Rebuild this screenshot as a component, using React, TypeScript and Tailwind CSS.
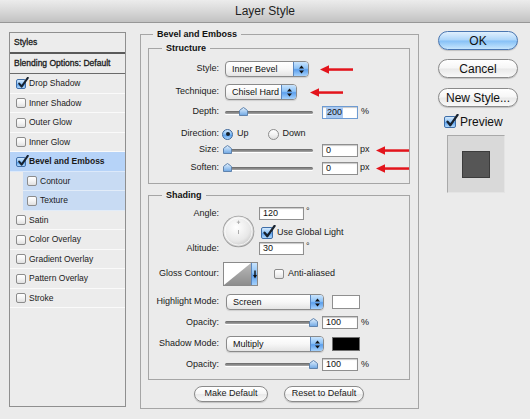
import React from "react";

function CheckBox({ checked = false, big = false }: { checked?: boolean; big?: boolean }) {
  return (
    <span
      className={`relative inline-block shrink-0 rounded-[2px] border ${big ? "h-[12px] w-[12px]" : "h-[10px] w-[10px]"} ${
        checked
          ? "border-[#3f6ea8] bg-[linear-gradient(180deg,#d3e9fd_0%,#94c6f7_45%,#5fa3ee_55%,#afd8fd_100%)]"
          : "border-[#8c8c8c] bg-[linear-gradient(180deg,#ffffff_0%,#f4f4f4_50%,#e0e0e0_100%)]"
      }`}
    >
      {checked && (
        <svg
          className="absolute left-[0px] top-[-3px]"
          width={big ? 14 : 12}
          height={big ? 14 : 12}
          viewBox="0 0 12 12"
        >
          <path
            d="M2.2 6.6 L4.6 9.6 L10.8 0.8"
            fill="none"
            stroke="#17222f"
            strokeWidth="2"
            strokeLinecap="round"
            strokeLinejoin="round"
          />
        </svg>
      )}
    </span>
  );
}

function Radio({ checked = false }: { checked?: boolean }) {
  return (
    <span
      className={`flex h-[11px] w-[11px] shrink-0 items-center justify-center rounded-full border ${
        checked
          ? "border-[#3c679c] bg-[linear-gradient(180deg,#cfe6fd_0%,#8cc2f6_45%,#5aa0ec_55%,#aad5fd_100%)]"
          : "border-[#8c8c8c] bg-[linear-gradient(180deg,#ffffff_0%,#f2f2f2_50%,#dedede_100%)]"
      }`}
    >
      {checked && <span className="h-[4px] w-[4px] rounded-full bg-[#15202c]" />}
    </span>
  );
}

function Steps() {
  return (
    <svg width="5" height="9" viewBox="0 0 5 9">
      <polygon points="0,3.5 2.5,0.5 5,3.5" fill="#111" />
      <polygon points="0,5.5 5,5.5 2.5,8.5" fill="#111" />
    </svg>
  );
}

function Dropdown({ label, w, stepW }: { label: string; w: string; stepW: string }) {
  return (
    <div
      className={`flex h-[16px] shrink-0 overflow-hidden rounded-[4px] border border-[#8a8a8a] bg-[linear-gradient(180deg,#ffffff_0%,#f7f7f7_50%,#e4e4e4_100%)] shadow-[0_1px_1px_rgba(0,0,0,0.12)] ${w}`}
    >
      <span className="flex-1 pl-[6px] leading-[14px] text-[#111]">{label}</span>
      <span
        className={`flex items-center justify-center border-l border-[#5a87c0] bg-[linear-gradient(180deg,#c9e4fd_0%,#8ec3f7_45%,#5c9fec_55%,#a5d1fb_100%)] ${stepW}`}
      >
        <Steps />
      </span>
    </div>
  );
}

function Thumb() {
  return (
    <svg width="9" height="9" viewBox="0 0 9 9">
      <defs>
        <linearGradient id="thg" x1="0" y1="0" x2="0" y2="1">
          <stop offset="0" stopColor="#e3f0fc" />
          <stop offset="0.5" stopColor="#a9cdf2" />
          <stop offset="1" stopColor="#6ea6e2" />
        </linearGradient>
      </defs>
      <path
        d="M0.5 4 Q0.5 3.3 1.2 2.8 L4.5 0.5 L7.8 2.8 Q8.5 3.3 8.5 4 V8.5 H0.5 Z"
        fill="url(#thg)"
        stroke="#5f83ad"
        strokeWidth="1"
      />
    </svg>
  );
}

function Slider({ w, pos }: { w: string; pos: number }) {
  return (
    <div className={`relative flex h-[10px] shrink-0 items-center ${w}`}>
      <div className="h-[3px] w-full rounded-full bg-[linear-gradient(180deg,#666666,#a8a8a8)] shadow-[0_1px_0_#ffffff]" />
      <span className="absolute top-[0px] flex" style={{ left: pos }}>
        <Thumb />
      </span>
    </div>
  );
}

function NumInput({ value, w, selected = false }: { value: string; w: string; selected?: boolean }) {
  return (
    <div
      className={`flex h-[13px] shrink-0 items-center border bg-white pl-[3px] leading-[11px] text-[#111] shadow-[inset_0_1px_1px_rgba(0,0,0,0.22)] ${w} ${
        selected ? "border-[#6e9bd2]" : "border-[#8f8f8f]"
      }`}
    >
      {selected ? <span className="bg-[#a9c9f1] px-[1px]">{value}</span> : value}
    </div>
  );
}

function RedArrow() {
  return (
    <svg width="33" height="9" viewBox="0 0 33 9" className="shrink-0">
      <polygon points="0,4.5 9,0.3 9,8.7" fill="#e3141c" />
      <rect x="8" y="3.3" width="25" height="2.5" fill="#e3141c" />
    </svg>
  );
}

function Label({ children }: { children: React.ReactNode }) {
  return <span className="w-[70px] shrink-0 text-right text-[#1a1a1a]">{children}</span>;
}

function Pill({
  children,
  primary = false,
  cls,
}: {
  children: React.ReactNode;
  primary?: boolean;
  cls: string;
}) {
  return (
    <div
      className={`flex items-center justify-center rounded-full border shadow-[0_1px_1px_rgba(0,0,0,0.18)] ${cls} ${
        primary
          ? "border-[#4a77b2] bg-[linear-gradient(180deg,#e0f0fe_0%,#acd5fa_48%,#85c0f6_52%,#c7e6fd_100%)]"
          : "border-[#8a8a8a] bg-[linear-gradient(180deg,#ffffff_0%,#f6f6f6_48%,#e9e9e9_52%,#f9f9f9_100%)]"
      }`}
    >
      {children}
    </div>
  );
}

type Row = { label: string; h: string; checked?: boolean; kind?: "sel" | "sub" };

const rows: Row[] = [
  { label: "Drop Shadow", h: "h-[20px]", checked: true },
  { label: "Inner Shadow", h: "h-[19px]" },
  { label: "Outer Glow", h: "h-[20px]" },
  { label: "Inner Glow", h: "h-[19px]" },
  { label: "Bevel and Emboss", h: "h-[20px]", checked: true, kind: "sel" },
  { label: "Contour", h: "h-[19px]", kind: "sub" },
  { label: "Texture", h: "h-[20px]", kind: "sub" },
  { label: "Satin", h: "h-[19px]" },
  { label: "Color Overlay", h: "h-[20px]" },
  { label: "Gradient Overlay", h: "h-[19px]" },
  { label: "Pattern Overlay", h: "h-[20px]" },
  { label: "Stroke", h: "h-[19px]" },
];

function StyleRow({ r }: { r: Row }) {
  if (r.kind === "sub") {
    return (
      <div className={`flex ${r.h}`}>
        <div className="ml-[13px] flex flex-1 items-center gap-[2px] border-b border-[#e2ecf8] bg-[#c8dbf3] pl-[4px]">
          <CheckBox checked={r.checked} />
          <span className="pl-[1px]">{r.label}</span>
        </div>
      </div>
    );
  }
  return (
    <div
      className={`flex items-center gap-[2px] border-b pl-[6px] ${r.h} ${
        r.kind === "sel" ? "border-[#dce9fa] bg-[#b6d3f8] font-bold" : "border-[#fafafa]"
      }`}
    >
      <CheckBox checked={r.checked} />
      <span className="pl-[1px]">{r.label}</span>
    </div>
  );
}

export default function App() {
  return (
    <div className="flex h-[419px] w-[530px] flex-col overflow-hidden bg-[#ebebeb] font-['Liberation_Sans',Arial,sans-serif] text-[9px] text-[#1a1a1a]">
      {/* title bar */}
      <div className="flex h-[23px] shrink-0 items-center justify-center border-b border-[#979797] bg-[linear-gradient(180deg,#ececec_0%,#d8d8d8_50%,#c2c2c2_100%)] text-[12px] text-[#1e1e1e]">
        Layer Style
      </div>

      <div className="flex flex-1 items-start">
        {/* left styles list */}
        <div className="ml-[9px] mt-[9px] flex h-[375px] w-[117px] shrink-0 flex-col border border-[#8f8f8f] bg-[#ececec] text-[8.5px]">
          <div className="flex h-[21px] items-center border-b-2 border-[#5a5a5a] pl-[4px] [-webkit-text-stroke:0.3px_#1a1a1a]">
            Styles
          </div>
          <div className="flex h-[20px] items-center border-b border-[#6a6a6a] pl-[4px] [-webkit-text-stroke:0.3px_#1a1a1a]">
            Blending Options: Default
          </div>
          {rows.map((r) => (
            <StyleRow key={r.label} r={r} />
          ))}
        </div>

        {/* main group */}
        <fieldset className="ml-[14px] mt-[5px] w-[278px] shrink-0 border border-[#a5a5a5] pl-[7px] pr-[8px] pb-[6px]">
          <legend className="ml-[5px] px-[4px] font-bold leading-[13px] text-[#111]">Bevel and Emboss</legend>

          {/* Structure */}
          <fieldset className="mt-[1px] border border-[#a5a5a5] pb-[7px]">
            <legend className="ml-[13px] px-[4px] font-bold leading-[13px] text-[#111]">Structure</legend>
            <div className="flex flex-col">
              <div className="mt-[4px] flex h-[20px] items-center">
                <Label>Style:</Label>
                <div className="ml-[6px] flex items-center">
                  <Dropdown label="Inner Bevel" w="w-[84px]" stepW="w-[15px]" />
                  <span className="ml-[11px] flex">
                    <RedArrow />
                  </span>
                </div>
              </div>
              <div className="mt-[3px] flex h-[20px] items-center">
                <Label>Technique:</Label>
                <div className="ml-[6px] flex items-center">
                  <Dropdown label="Chisel Hard" w="w-[72px]" stepW="w-[15px]" />
                  <span className="ml-[13px] flex">
                    <RedArrow />
                  </span>
                </div>
              </div>
              <div className="mt-[2px] flex h-[16px] items-center">
                <Label>Depth:</Label>
                <div className="ml-[6px] flex items-center">
                  <Slider w="w-[88px]" pos={14} />
                  <span className="ml-[9px] flex">
                    <NumInput value="200" w="w-[36px]" selected />
                  </span>
                  <span className="ml-[3px]">%</span>
                </div>
              </div>
              <div className="mt-[6px] flex h-[16px] items-center">
                <Label>Direction:</Label>
                <div className="ml-[3px] flex items-center">
                  <Radio checked />
                  <span className="ml-[4px]">Up</span>
                  <span className="ml-[19px] flex">
                    <Radio />
                  </span>
                  <span className="ml-[4px]">Down</span>
                </div>
              </div>
              <div className="flex h-[16px] items-center">
                <Label>Size:</Label>
                <div className="ml-[6px] flex items-center">
                  <Slider w="w-[88px]" pos={-2} />
                  <span className="ml-[9px] flex">
                    <NumInput value="0" w="w-[36px]" />
                  </span>
                  <span className="ml-[2px] w-[16px]">px</span>
                  <RedArrow />
                </div>
              </div>
              <div className="mt-[2px] flex h-[16px] items-center">
                <Label>Soften:</Label>
                <div className="ml-[6px] flex items-center">
                  <Slider w="w-[88px]" pos={-2} />
                  <span className="ml-[9px] flex">
                    <NumInput value="0" w="w-[36px]" />
                  </span>
                  <span className="ml-[2px] w-[16px]">px</span>
                  <RedArrow />
                </div>
              </div>
            </div>
          </fieldset>

          {/* Shading */}
          <fieldset className="mt-[5px] border border-[#a5a5a5] pb-[8px]">
            <legend className="ml-[13px] px-[4px] font-bold leading-[13px] text-[#111]">Shading</legend>
            <div className="flex flex-col">
              <div className="mt-[5px] flex h-[48px]">
                <div className="flex w-[70px] shrink-0 flex-col justify-between">
                  <span className="flex h-[13px] items-center justify-end">Angle:</span>
                  <span className="flex h-[13px] items-center justify-end">Altitude:</span>
                </div>
                <div className="ml-[3px] flex items-center">
                  <svg width="33" height="33" viewBox="0 0 33 33">
                    <defs>
                      <radialGradient id="ang" cx="42%" cy="36%" r="70%">
                        <stop offset="0" stopColor="#ffffff" />
                        <stop offset="0.65" stopColor="#e8e8e8" />
                        <stop offset="1" stopColor="#c4c4c4" />
                      </radialGradient>
                    </defs>
                    <circle cx="16.5" cy="16.5" r="15.8" fill="#9a9a9a" />
                    <circle cx="16.5" cy="16.5" r="15" fill="url(#ang)" />
                    <circle cx="16.5" cy="16.5" r="13.6" fill="none" stroke="#ffffff" strokeOpacity="0.7" />
                    <path d="M16.5 5.5 v3.5 M14.8 7.2 h3.4" stroke="#a5a5a5" strokeWidth="0.8" />
                    <path d="M16.5 15 v4" stroke="#a5a5a5" strokeWidth="0.9" />
                  </svg>
                </div>
                <div className="ml-[4px] flex flex-col">
                  <div className="flex items-start">
                    <NumInput value="120" w="w-[45px]" />
                    <span className="ml-[2px] leading-[8px]">°</span>
                  </div>
                  <div className="mt-[7px] flex h-[12px] items-center pl-[2px]">
                    <CheckBox checked big />
                    <span className="ml-[4px]">Use Global Light</span>
                  </div>
                  <div className="mt-[3px] flex items-start">
                    <NumInput value="30" w="w-[45px]" />
                    <span className="ml-[2px] leading-[8px]">°</span>
                  </div>
                </div>
              </div>

              <div className="mt-[7px] flex h-[24px] items-center">
                <Label>Gloss Contour:</Label>
                <div className="ml-[4px] flex h-[24px] w-[35px] border border-[#8a8a8a] bg-white">
                  <svg width="27" height="22" viewBox="0 0 27 22">
                    <defs>
                      <linearGradient id="gcg" x1="0" y1="0" x2="0" y2="1">
                        <stop offset="0" stopColor="#b9b9b9" />
                        <stop offset="1" stopColor="#8d8d8d" />
                      </linearGradient>
                    </defs>
                    <polygon points="0,22 27,0 27,22" fill="url(#gcg)" />
                  </svg>
                  <div className="flex flex-1 items-center justify-center border-l border-[#5a87c0] bg-[linear-gradient(180deg,#c9e4fd_0%,#8ec3f7_45%,#5c9fec_55%,#a5d1fb_100%)]">
                    <svg width="4" height="9" viewBox="0 0 4 9">
                      <rect x="1.3" y="0.5" width="1.4" height="5" fill="#111" />
                      <polygon points="0,5 4,5 2,8.5" fill="#111" />
                    </svg>
                  </div>
                </div>
                <span className="ml-[16px] flex">
                  <CheckBox />
                </span>
                <span className="ml-[4px]">Anti-aliased</span>
              </div>

              <div className="mt-[8px] flex h-[16px] items-center">
                <Label>Highlight Mode:</Label>
                <div className="ml-[7px] flex items-center">
                  <Dropdown label="Screen" w="w-[98px]" stepW="w-[13px]" />
                  <span className="ml-[8px] h-[14px] w-[28px] border border-[#8f8f8f] bg-white" />
                </div>
              </div>
              <div className="mt-[6px] flex h-[13px] items-center">
                <Label>Opacity:</Label>
                <div className="ml-[6px] flex items-center">
                  <Slider w="w-[92px]" pos={84} />
                  <span className="ml-[5px] flex">
                    <NumInput value="100" w="w-[36px]" />
                  </span>
                  <span className="ml-[3px]">%</span>
                </div>
              </div>
              <div className="mt-[7px] flex h-[16px] items-center">
                <Label>Shadow Mode:</Label>
                <div className="ml-[7px] flex items-center">
                  <Dropdown label="Multiply" w="w-[98px]" stepW="w-[13px]" />
                  <span className="ml-[8px] h-[14px] w-[28px] border border-[#6f6f6f] bg-black" />
                </div>
              </div>
              <div className="mt-[6px] flex h-[13px] items-center">
                <Label>Opacity:</Label>
                <div className="ml-[6px] flex items-center">
                  <Slider w="w-[92px]" pos={84} />
                  <span className="ml-[5px] flex">
                    <NumInput value="100" w="w-[36px]" />
                  </span>
                  <span className="ml-[3px]">%</span>
                </div>
              </div>
            </div>
          </fieldset>

          <div className="mt-[6px] flex justify-center gap-[16px]">
            <Pill cls="h-[16px] w-[74px]">Make Default</Pill>
            <Pill cls="h-[16px] w-[80px]">Reset to Default</Pill>
          </div>
        </fieldset>

        {/* right column */}
        <div className="ml-[19px] mt-[8px] flex w-[80px] shrink-0 flex-col text-[12px] text-[#111]">
          <Pill primary cls="h-[19px] w-[80px]">
            OK
          </Pill>
          <Pill cls="mt-[9px] h-[19px] w-[80px]">Cancel</Pill>
          <Pill cls="mt-[10px] h-[19px] w-[80px]">New Style...</Pill>
          <div className="mt-[8px] flex h-[14px] items-center pl-[6px]">
            <CheckBox checked big />
            <span className="ml-[4px]">Preview</span>
          </div>
          <div className="ml-[9px] mt-[6px] flex h-[58px] w-[58px] items-center justify-center border border-b-[#e4e4e4] border-l-[#a9a9a9] border-r-[#e4e4e4] border-t-[#a9a9a9] bg-[#d9d9d9]">
            <div className="h-[27px] w-[28px] border border-[#3c3c3c] bg-[#565656]" />
          </div>
        </div>
      </div>
    </div>
  );
}
